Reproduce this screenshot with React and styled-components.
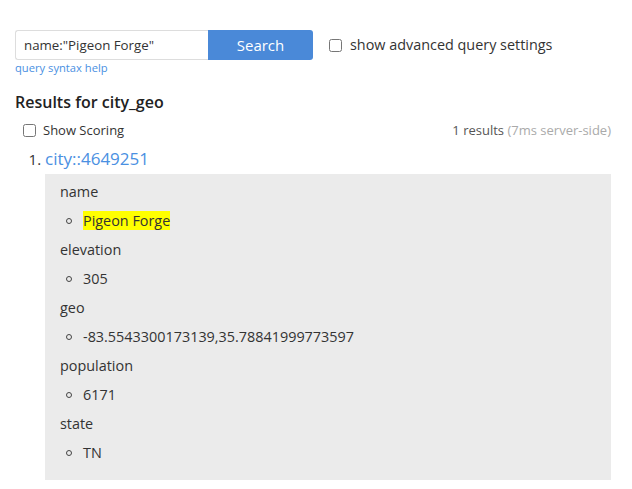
import React from 'react'
import styled, { createGlobalStyle } from 'styled-components'

const GlobalStyle = createGlobalStyle`
  body {
    margin: 0;
    background: #fff;
    font-family: 'Open Sans', 'Noto Sans', sans-serif;
    color: #333;
  }
`

const Page = styled.div`
  padding: 30px 21px 0 15px;
`

const SearchRow = styled.div`
  display: flex;
  align-items: center;
  height: 30px;
`

const QueryInput = styled.input`
  box-sizing: border-box;
  width: 193px;
  height: 30px;
  margin: 0;
  padding: 0 8px;
  border: 1px solid #ddd;
  border-right: none;
  border-radius: 3px 0 0 3px;
  font-family: inherit;
  font-size: 13.3px;
  color: #333;
  outline: none;
`

const SearchButton = styled.button`
  box-sizing: border-box;
  width: 105px;
  height: 30px;
  margin: 0;
  border: none;
  border-radius: 0 3px 3px 0;
  background: #4a89d8;
  color: #fff;
  font-family: inherit;
  font-size: 15px;
  cursor: pointer;
`

const CheckLabel = styled.label`
  display: flex;
  align-items: center;
  gap: ${p => p.gap || 7}px;
  margin-left: ${p => p.indent || 0}px;
  font-size: ${p => p.size || 14}px;
  color: #333;
  line-height: 20px;
  input {
    margin: 0;
    width: 13px;
    height: 13px;
  }
`

const HelpLink = styled.a`
  display: block;
  margin-top: 1px;
  font-size: 11.2px;
  line-height: 14px;
  color: #4a90e2;
  text-decoration: none;
`

const Heading = styled.h3`
  margin: 16px 0 0;
  font-size: 16px;
  font-weight: 600;
  line-height: 22px;
  color: #222;
`

const MetaRow = styled.div`
  display: flex;
  justify-content: space-between;
  align-items: center;
  margin-top: 7px;
  height: 20px;
`

const ResultCount = styled.span`
  font-size: 13px;
  color: #555;
  span {
    color: #aaa;
  }
`

const ResultList = styled.ol`
  margin: 9px 0 0;
  padding: 0 0 0 30px;
  font-size: 15px;
  line-height: 20px;
  color: #333;
`

const ResultLink = styled.a`
  font-size: 17px;
  color: #4a90e2;
  text-decoration: none;
`

const DocBox = styled.div`
  box-sizing: border-box;
  display: flex;
  flex-direction: column;
  gap: 9px;
  height: 306px;
  margin-top: 5px;
  padding: 8px 15px 17px;
  background: #ebebeb;
`

const FieldName = styled.div`
  font-size: 14.4px;
  line-height: 20px;
  color: #333;
`

const FieldValue = styled.div`
  position: relative;
  padding-left: 23px;
  font-size: 14.4px;
  line-height: 20px;
  color: #333;
  &::before {
    content: '';
    position: absolute;
    left: 6px;
    top: 7px;
    width: 4px;
    height: 4px;
    border: 1px solid #444;
    border-radius: 50%;
  }
`

const Highlight = styled.mark`
  background: #ffff00;
  color: #333;
`

const doc = [
  ['name', 'Pigeon Forge', true],
  ['elevation', '305'],
  ['geo', '-83.5543300173139,35.78841999773597'],
  ['population', '6171'],
  ['state', 'TN']
]

export default function App () {
  return (
    <Page>
      <GlobalStyle />
      <SearchRow>
        <QueryInput defaultValue='name:"Pigeon Forge"' />
        <SearchButton>Search</SearchButton>
        <CheckLabel indent={16} gap={8} size={14.4}>
          <input type='checkbox' />
          show advanced query settings
        </CheckLabel>
      </SearchRow>
      <HelpLink href='#'>query syntax help</HelpLink>
      <Heading>Results for city_geo</Heading>
      <MetaRow>
        <CheckLabel indent={8} gap={7} size={13}>
          <input type='checkbox' />
          Show Scoring
        </CheckLabel>
        <ResultCount>
          1 results <span>(7ms server-side)</span>
        </ResultCount>
      </MetaRow>
      <ResultList>
        <li>
          <ResultLink href='#'>city::4649251</ResultLink>
          <DocBox>
            {doc.map(([key, value, hl]) => (
              <React.Fragment key={key}>
                <FieldName>{key}</FieldName>
                <FieldValue>
                  {hl ? <Highlight>{value}</Highlight> : value}
                </FieldValue>
              </React.Fragment>
            ))}
          </DocBox>
        </li>
      </ResultList>
    </Page>
  )
}
